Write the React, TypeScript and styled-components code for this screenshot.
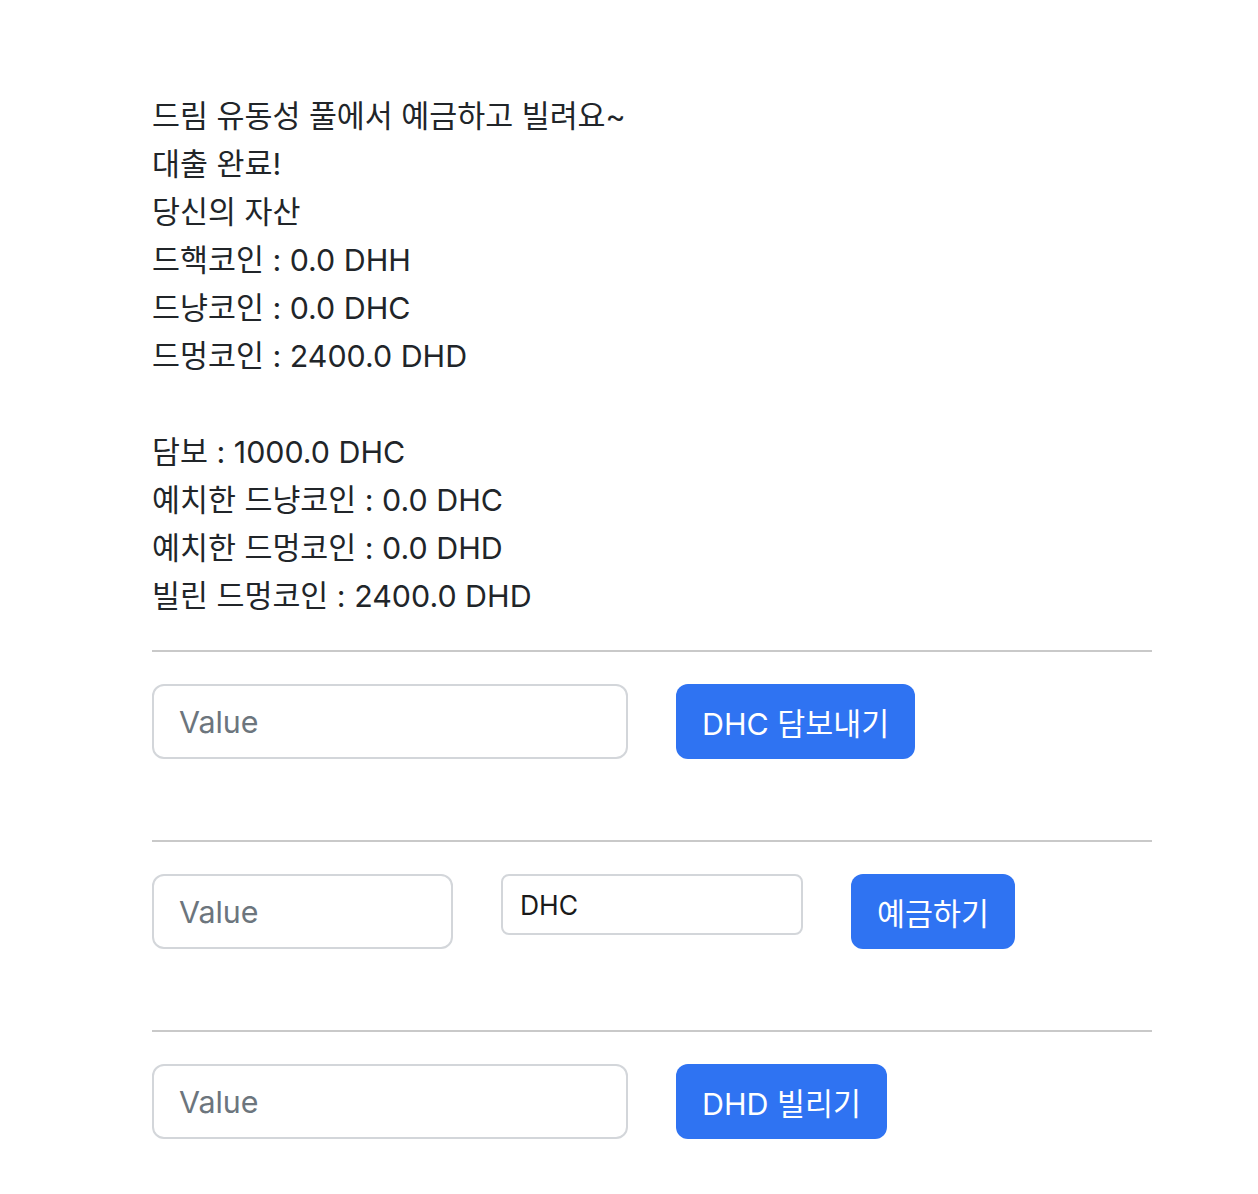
import React from "react";
import styled, { createGlobalStyle } from "styled-components";

const Global = createGlobalStyle`
  html, body { margin: 0; padding: 0; background: #ffffff; }
  body {
    font-family: "Inter", "Noto Sans CJK KR", sans-serif;
    color: #212529;
  }
  * { box-sizing: border-box; }
`;

const Page = styled.div`
  width: 1000px;
  margin-left: 152px;
  padding-top: 90px;
`;

const Info = styled.div`
  font-size: 30.4px;
  line-height: 48px;
`;

const Line = styled.div`
  height: 48px;
  padding-top: 2px;
  white-space: nowrap;
`;

const Rule = styled.hr`
  margin: 32px 0;
  border: 0;
  border-top: 2px solid #c9c9c9;
`;

const Section = styled.div`
  padding-bottom: 49px;
`;

const Row = styled.div`
  display: flex;
  align-items: flex-start;
  gap: 48px;
`;

const Field = styled.input<{ $w: number }>`
  width: ${(p) => p.$w}px;
  height: 75px;
  padding: 0 25px;
  border: 2px solid #d3d6da;
  border-radius: 12px;
  font-family: "Inter", "Noto Sans CJK KR", sans-serif;
  font-size: 30.4px;
  color: #212529;
  background: #fff;
  outline: none;
  &::placeholder { color: #6c757d; }
`;

const Select = styled.select`
  appearance: none;
  -webkit-appearance: none;
  width: 302px;
  height: 61px;
  padding: 0 17px;
  border: 2px solid #d3d6da;
  border-radius: 8px;
  background: #fff;
  font-family: "Inter", "Noto Sans CJK KR", sans-serif;
  font-size: 26.5px;
  color: #1a1a1a;
  outline: none;
`;

const Button = styled.button`
  height: 75px;
  padding: 0 26px;
  border: 0;
  border-radius: 12px;
  background: #2f73f2;
  color: #fff;
  font-family: "Inter", "Noto Sans CJK KR", sans-serif;
  font-size: 30.4px;
  cursor: pointer;
`;

const lines = [
  "드림 유동성 풀에서 예금하고 빌려요~",
  "대출 완료!",
  "당신의 자산",
  "드핵코인 : 0.0 DHH",
  "드냥코인 : 0.0 DHC",
  "드멍코인 : 2400.0 DHD",
  "",
  "담보 : 1000.0 DHC",
  "예치한 드냥코인 : 0.0 DHC",
  "예치한 드멍코인 : 0.0 DHD",
  "빌린 드멍코인 : 2400.0 DHD",
];

export default function App() {
  return (
    <>
      <Global />
      <Page>
        <Info>
          {lines.map((t, i) => (
            <Line key={i}>{t}</Line>
          ))}
        </Info>
        <Rule />
        <Section>
          <Row>
            <Field $w={476} placeholder="Value" />
            <Button>DHC 담보내기</Button>
          </Row>
        </Section>
        <Rule />
        <Section>
          <Row>
            <Field $w={301} placeholder="Value" />
            <Select defaultValue="DHC">
              <option value="DHC">DHC</option>
              <option value="DHD">DHD</option>
            </Select>
            <Button>예금하기</Button>
          </Row>
        </Section>
        <Rule />
        <Section>
          <Row>
            <Field $w={476} placeholder="Value" />
            <Button>DHD 빌리기</Button>
          </Row>
        </Section>
      </Page>
    </>
  );
}
